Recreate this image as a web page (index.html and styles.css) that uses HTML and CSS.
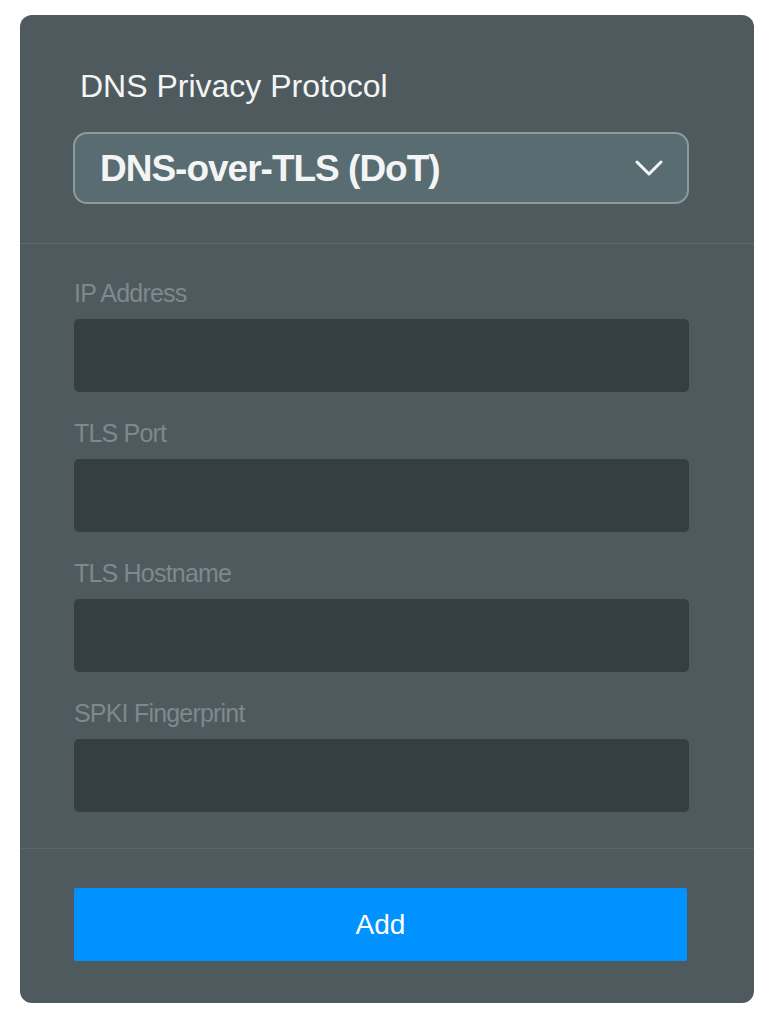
FILE: index.html
```html
<!DOCTYPE html>
<html lang="en">
<head>
<meta charset="utf-8">
<title>DNS Privacy Protocol</title>
<link rel="stylesheet" href="styles.css">
</head>
<body>
<div class="page">
  <section class="card">
    <div class="head">
      <div class="title">DNS Privacy Protocol</div>
      <div class="select">
        <span class="select-text">DNS-over-TLS (DoT)</span>
        <svg class="chevron" width="28" height="16" viewBox="0 0 28 16" aria-hidden="true">
          <path d="M2 2 L14 14 L26 2" fill="none" stroke="#f4f6f6" stroke-width="3" stroke-linecap="round" stroke-linejoin="round"/>
        </svg>
      </div>
    </div>
    <div class="fields">
      <div class="field">
        <div class="label">IP Address</div>
        <div class="input"></div>
      </div>
      <div class="field">
        <div class="label">TLS Port</div>
        <div class="input"></div>
      </div>
      <div class="field">
        <div class="label">TLS Hostname</div>
        <div class="input"></div>
      </div>
      <div class="field">
        <div class="label">SPKI Fingerprint</div>
        <div class="input"></div>
      </div>
    </div>
    <div class="foot">
      <div class="btn">Add</div>
    </div>
  </section>
</div>
</body>
</html>
```

FILE: styles.css
```css
html, body {
  margin: 0;
  padding: 0;
  background: #ffffff;
}

body {
  font-family: "Liberation Sans", Arial, sans-serif;
}

.page {
  padding: 15px 0 21px 20px;
}

.card {
  width: 734px;
  height: 988px;
  box-sizing: border-box;
  background: #4f5a5f;
  border-radius: 12px;
  display: flex;
  flex-direction: column;
  overflow: hidden;
}

.head {
  padding: 55px 0 39px 53px;
  border-bottom: 1px solid #5f6b6d;
  display: flex;
  flex-direction: column;
}

.title {
  margin-left: 7px;
  font-size: 32px;
  line-height: 32px;
  color: #f3f5f5;
}

.select {
  margin-top: 30px;
  width: 616px;
  height: 72px;
  box-sizing: border-box;
  border: 2px solid #8a9c99;
  border-radius: 14px;
  background: #586c72;
  display: flex;
  align-items: center;
  justify-content: space-between;
  padding: 0 24px 0 25px;
}

.select-text {
  font-size: 37px;
  line-height: 37px;
  font-weight: 700;
  letter-spacing: -1px;
  color: #f3f5f5;
}

.chevron {
  display: block;
}

.fields {
  padding: 37px 0 36px 54px;
  border-bottom: 1px solid #5a6669;
  display: flex;
  flex-direction: column;
  gap: 29px;
}

.field {
  display: flex;
  flex-direction: column;
  gap: 13px;
}

.label {
  font-size: 25px;
  line-height: 25px;
  letter-spacing: -0.8px;
  color: #7d898c;
}

.input {
  width: 615px;
  height: 73px;
  background: #353f42;
  border-radius: 5px;
}

.foot {
  padding: 39px 0 0 54px;
}

.btn {
  width: 613px;
  height: 73px;
  background: #0092ff;
  border-radius: 2px;
  display: flex;
  align-items: center;
  justify-content: center;
  font-size: 28px;
  color: #ffffff;
}
```
